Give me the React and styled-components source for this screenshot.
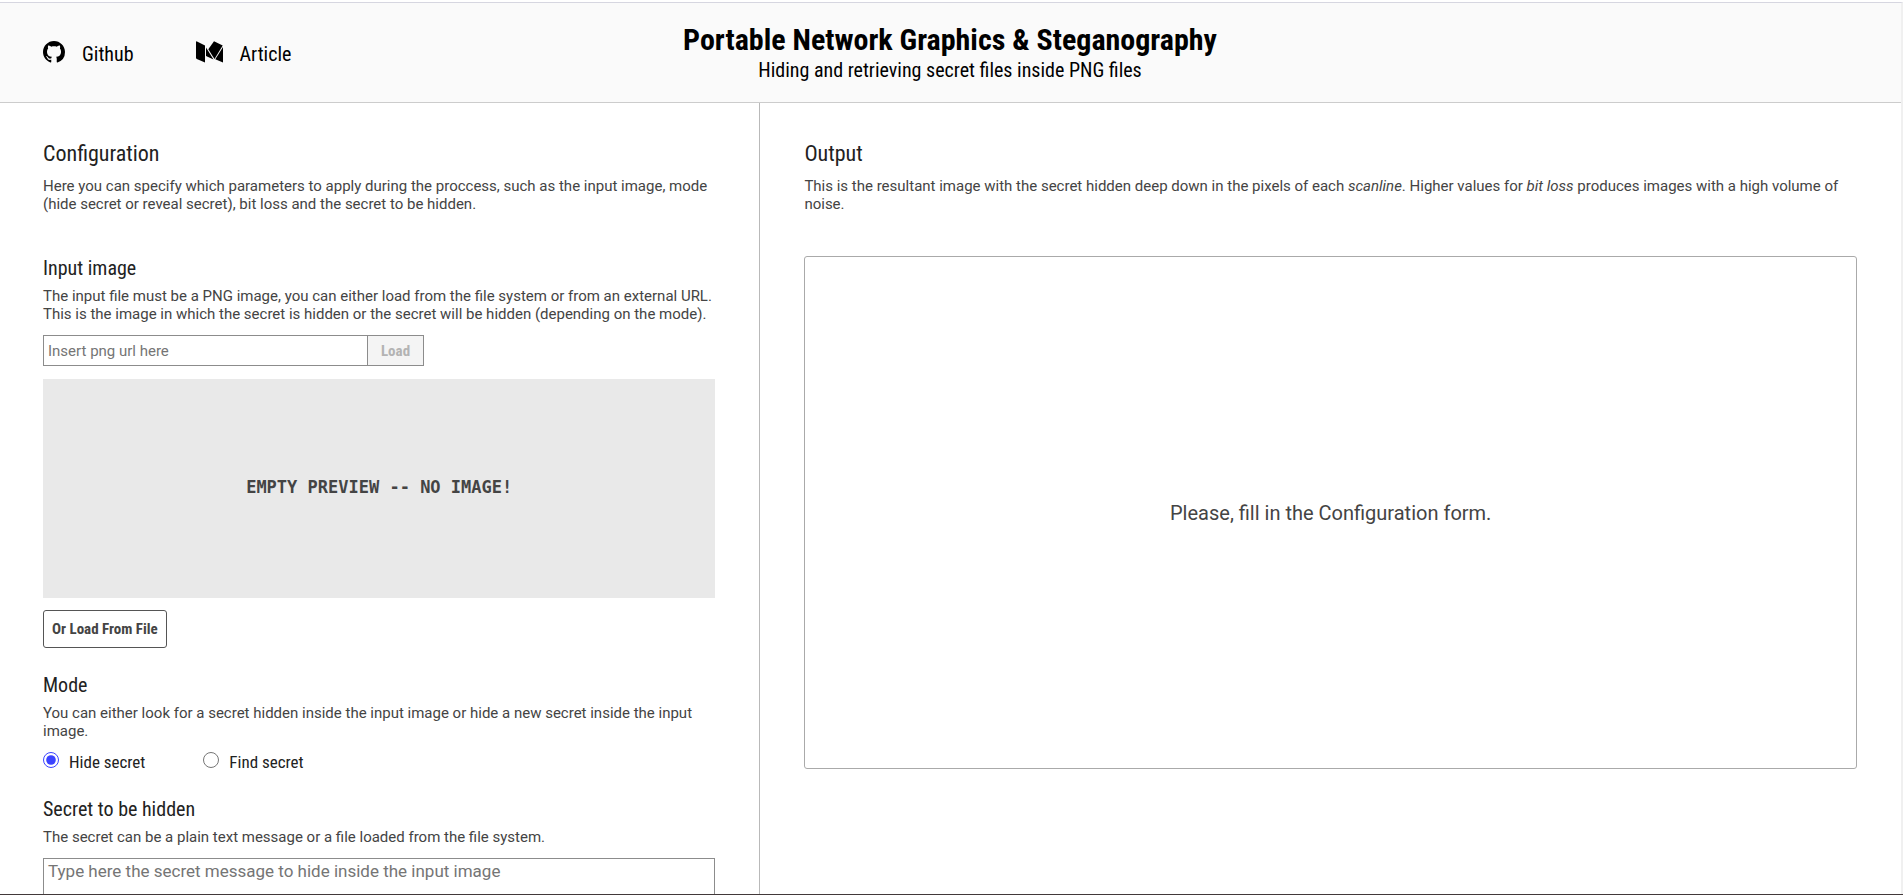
import React, { useState } from 'react';
import styled, { createGlobalStyle } from 'styled-components';

const condensed = '"Roboto Condensed", "Liberation Sans Narrow", Roboto, sans-serif';

const GlobalStyle = createGlobalStyle`
  *, *::before, *::after { box-sizing: border-box; }
  body {
    margin: 0;
    background: #fff;
    color: #444;
    font-family: Roboto, sans-serif;
  }
  h1, h2, h3, p { margin: 0; font-weight: 400; }
`;

const Page = styled.div`
  display: flex;
  flex-direction: column;
  height: 100vh;
  padding-top: 2px;
  border-bottom: 1px solid #42393a;
`;

const Frame = styled.div`
  flex: 1;
  min-height: 0;
  display: flex;
  flex-direction: column;
  overflow: hidden;
  border-top: 1px solid #d6d6e0;
  border-right: 2px solid #f0f0f0;
`;

const Header = styled.header`
  flex: none;
  display: grid;
  grid-template-columns: 1fr auto 1fr;
  align-items: center;
  height: 100px;
  padding: 0 44px 0 43px;
  background: #fafafa;
  border-bottom: 1px solid #ccc;
  color: #000;
  font-family: ${condensed};
`;

const Nav = styled.nav`
  display: flex;
  gap: 62px;
  padding-top: 2px;
`;

const NavLink = styled.a`
  display: flex;
  gap: 17px;
  color: inherit;
  font-size: 20px;
  line-height: 28px;
  text-decoration: none;

  svg { display: block; height: 22px; width: auto; margin-top: 1px; }
`;

const Brand = styled.div`
  padding-bottom: 2px;
  text-align: center;
`;

const Title = styled.h1`
  && { font-weight: 700; }
  font-size: 30px;
  line-height: 36px;
`;

const Subtitle = styled.p`
  font-size: 20px;
  line-height: 24px;
`;

const Columns = styled.main`
  flex: 1;
  min-height: 0;
  display: grid;
  grid-template-columns: 2fr 3fr;
`;

const Panel = styled.section`
  min-width: 0;
  padding: 37px 44px 0 ${(p) => (p.$divided ? 43 : 44)}px;
  border-right: ${(p) => (p.$divided ? '1px solid #b9b9b9' : '0')};
`;

const PanelTitle = styled.h2`
  margin-bottom: 9px;
  color: #222;
  font-family: ${condensed};
  font-size: 22px;
  line-height: 28px;
`;

const Group = styled.div`
  margin-top: ${(p) => (p.$first ? 43 : 25)}px;
`;

const GroupTitle = styled.h3`
  margin-bottom: 7px;
  color: #222;
  font-family: ${condensed};
  font-size: 20px;
  line-height: 24px;
`;

const Text = styled.p`
  font-size: 15px;
  line-height: 18px;
`;

const UrlRow = styled.div`
  display: flex;
  width: 381px;
  height: 31px;
  margin: 12px 0 13px;
`;

const UrlInput = styled.input`
  flex: 1;
  min-width: 0;
  padding: 0 4px;
  border: 1px solid #8c8c8c;
  border-right: 0;
  font: 15px Roboto, sans-serif;

  &::placeholder { color: #757575; }
`;

const LoadButton = styled.button`
  width: 57px;
  padding: 0;
  border: 1px solid #8c8c8c;
  background: #f4f4f4;
  color: #b3b3b3;
  font: 700 15px ${condensed};
`;

const Preview = styled.div`
  display: flex;
  align-items: center;
  justify-content: center;
  height: 219px;
  margin-bottom: 12px;
  padding-bottom: 3px;
  background: #e9e9e9;
  font: 700 17px "DejaVu Sans Mono", monospace;
`;

const FileButton = styled.button`
  display: block;
  height: 38px;
  padding: 0 8px;
  border: 1px solid #555;
  border-radius: 3px;
  background: #fff;
  color: #444;
  font: 700 15px ${condensed};
`;

const Options = styled.div`
  display: flex;
  gap: 58px;
  margin-top: 12px;
`;

const Option = styled.label`
  display: flex;
  gap: 10px;
  color: #222;
  font-family: ${condensed};
  font-size: 17px;
  line-height: 20px;
`;

const Radio = styled.input`
  width: 16px;
  height: 16px;
  margin: 0;
  accent-color: #3b43ff;
`;

const SecretBox = styled.textarea`
  display: block;
  width: 100%;
  height: 120px;
  margin-top: 12px;
  padding: 3px 4px;
  border: 1px solid #8c8c8c;
  resize: none;
  font: 17px/18px Roboto, sans-serif;

  &::placeholder { color: #757575; }
`;

const Result = styled.div`
  display: flex;
  align-items: center;
  justify-content: center;
  height: 513px;
  margin-top: 43px;
  border: 1px solid #aaa;
  border-radius: 3px;
  font-size: 20px;
`;

const GithubMark = () => (
  <svg viewBox="0 0 16 16" fill="currentColor" aria-hidden="true">
    <path d="M8 0C3.58 0 0 3.58 0 8c0 3.54 2.29 6.53 5.47 7.59.4.07.55-.17.55-.38 0-.19-.01-.82-.01-1.49-2.01.37-2.53-.49-2.69-.94-.09-.23-.48-.94-.82-1.13-.28-.15-.68-.52-.01-.53.63-.01 1.08.58 1.23.82.72 1.21 1.87.87 2.33.66.07-.52.28-.87.51-1.07-1.78-.2-3.64-.89-3.64-3.95 0-.87.31-1.59.82-2.15-.08-.2-.36-1.02.08-2.12 0 0 .67-.21 2.2.82.64-.18 1.32-.27 2-.27s1.36.09 2 .27c1.53-1.04 2.2-.82 2.2-.82.44 1.1.16 1.92.08 2.12.51.56.82 1.27.82 2.15 0 3.07-1.87 3.75-3.65 3.95.29.25.54.73.54 1.48 0 1.07-.01 1.93-.01 2.2 0 .21.15.46.55.38A8.01 8.01 0 0 0 16 8c0-4.42-3.58-8-8-8z" />
  </svg>
);

const MediumMark = () => (
  <svg viewBox="0 0 27 22" fill="currentColor" aria-hidden="true">
    <path d="M0 1Q0 0 1 .4L9 4.4V21.5L.8 18Q0 17.500 0 16.500Z" />
    <path d="M10 6.500L17.500 18.500L10 15Z" />
    <path d="M18 .3L26.700 4.400L18.500 18L12.300 8.300Z" />
    <path d="M27 6V21.500L19.300 18.200Z" />
  </svg>
);

export default function App() {
  const [mode, setMode] = useState('hide');

  return (
    <>
      <GlobalStyle />
      <Page>
        <Frame>
          <Header>
            <Nav>
              <NavLink href="#github"><GithubMark />Github</NavLink>
              <NavLink href="#article"><MediumMark />Article</NavLink>
            </Nav>
            <Brand>
              <Title>Portable Network Graphics &amp; Steganography</Title>
              <Subtitle>Hiding and retrieving secret files inside PNG files</Subtitle>
            </Brand>
          </Header>
          <Columns>
            <Panel $divided>
              <PanelTitle>Configuration</PanelTitle>
              <Text>
                Here you can specify which parameters to apply during the proccess, such as the input
                image, mode (hide secret or reveal secret), bit loss and the secret to be hidden.
              </Text>
              <Group $first>
                <GroupTitle>Input image</GroupTitle>
                <Text>
                  The input file must be a PNG image, you can either load from the file system or from
                  an external URL. This is the image in which the secret is hidden or the secret will
                  be hidden (depending on the mode).
                </Text>
                <UrlRow>
                  <UrlInput type="text" aria-label="Input image URL" placeholder="Insert png url here" />
                  <LoadButton type="button" disabled>Load</LoadButton>
                </UrlRow>
                <Preview>EMPTY PREVIEW -- NO IMAGE!</Preview>
                <FileButton type="button">Or Load From File</FileButton>
              </Group>
              <Group>
                <GroupTitle id="mode-title">Mode</GroupTitle>
                <Text>
                  You can either look for a secret hidden inside the input image or hide a new secret
                  inside the input image.
                </Text>
                <Options role="radiogroup" aria-labelledby="mode-title">
                  <Option>
                    <Radio type="radio" name="mode" checked={mode === 'hide'} onChange={() => setMode('hide')} />
                    Hide secret
                  </Option>
                  <Option>
                    <Radio type="radio" name="mode" checked={mode === 'find'} onChange={() => setMode('find')} />
                    Find secret
                  </Option>
                </Options>
              </Group>
              <Group>
                <GroupTitle id="secret-title">Secret to be hidden</GroupTitle>
                <Text>The secret can be a plain text message or a file loaded from the file system.</Text>
                <SecretBox
                  aria-labelledby="secret-title"
                  placeholder="Type here the secret message to hide inside the input image"
                />
              </Group>
            </Panel>
            <Panel>
              <PanelTitle>Output</PanelTitle>
              <Text>
                This is the resultant image with the secret hidden deep down in the pixels of each{' '}
                <em>scanline</em>. Higher values for <em>bit loss</em> produces images with a high
                volume of noise.
              </Text>
              <Result>Please, fill in the Configuration form.</Result>
            </Panel>
          </Columns>
        </Frame>
      </Page>
    </>
  );
}
